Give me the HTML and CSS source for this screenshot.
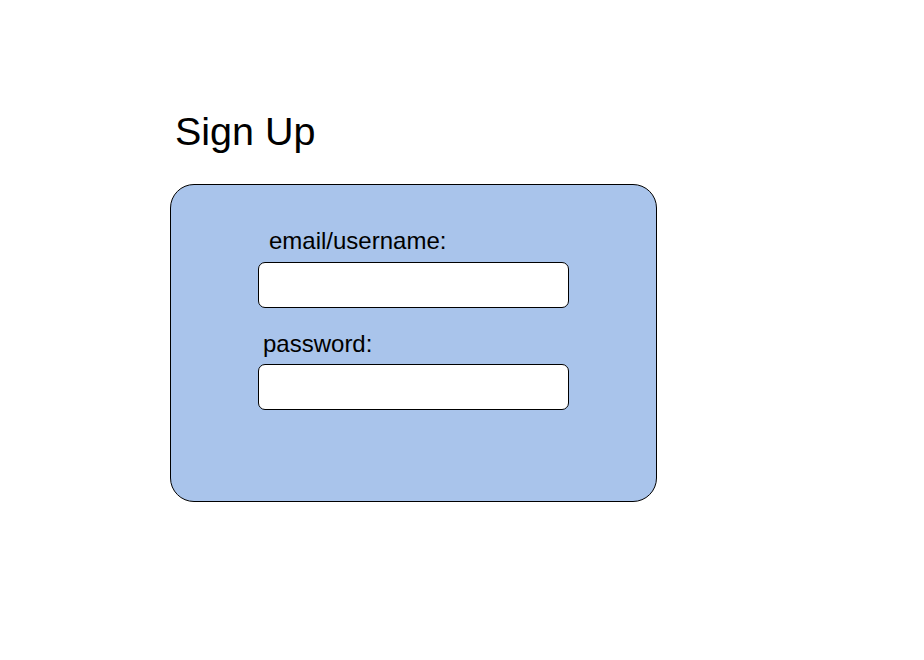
FILE: index.html
```html
<!DOCTYPE html>
<html lang="en">
<head>
<meta charset="utf-8">
<title>Sign Up</title>
<link rel="stylesheet" href="styles.css">
</head>
<body>
<main class="page">
  <h1 class="title">Sign Up</h1>
  <form class="card">
    <label class="field-label label-email" for="user">email/username:</label>
    <input class="field-input" id="user" type="text">
    <label class="field-label label-password" for="pass">password:</label>
    <input class="field-input" id="pass" type="password">
  </form>
</main>
</body>
</html>
```
FILE: styles.css
```css
html, body {
  margin: 0;
  padding: 0;
  background: #ffffff;
}
body {
  font-family: "Liberation Sans", Arial, sans-serif;
  color: #000000;
}
.page {
  display: flex;
  flex-direction: column;
  align-items: flex-start;
  padding: 109px 0 0 170px;
}
.title {
  margin: 0 0 30px 5px;
  font-size: 39.5px;
  font-weight: normal;
  line-height: 45px;
}
.card {
  box-sizing: border-box;
  width: 487px;
  height: 318px;
  margin: 0;
  padding: 42px 0 0 87px;
  background: #a9c4eb;
  border: 1px solid #000000;
  border-radius: 24px;
  display: flex;
  flex-direction: column;
  align-items: flex-start;
}
.field-label {
  display: block;
  font-size: 24px;
  line-height: 27px;
}
.label-email {
  margin: 0 0 8px 11px;
}
.label-password {
  margin: 22px 0 7px 5px;
}
.field-input {
  box-sizing: border-box;
  width: 311px;
  height: 46px;
  margin: 0;
  padding: 0 10px;
  background: #ffffff;
  border: 1px solid #000000;
  border-radius: 7px;
  font-family: inherit;
  font-size: 18px;
  outline: none;
}
```
